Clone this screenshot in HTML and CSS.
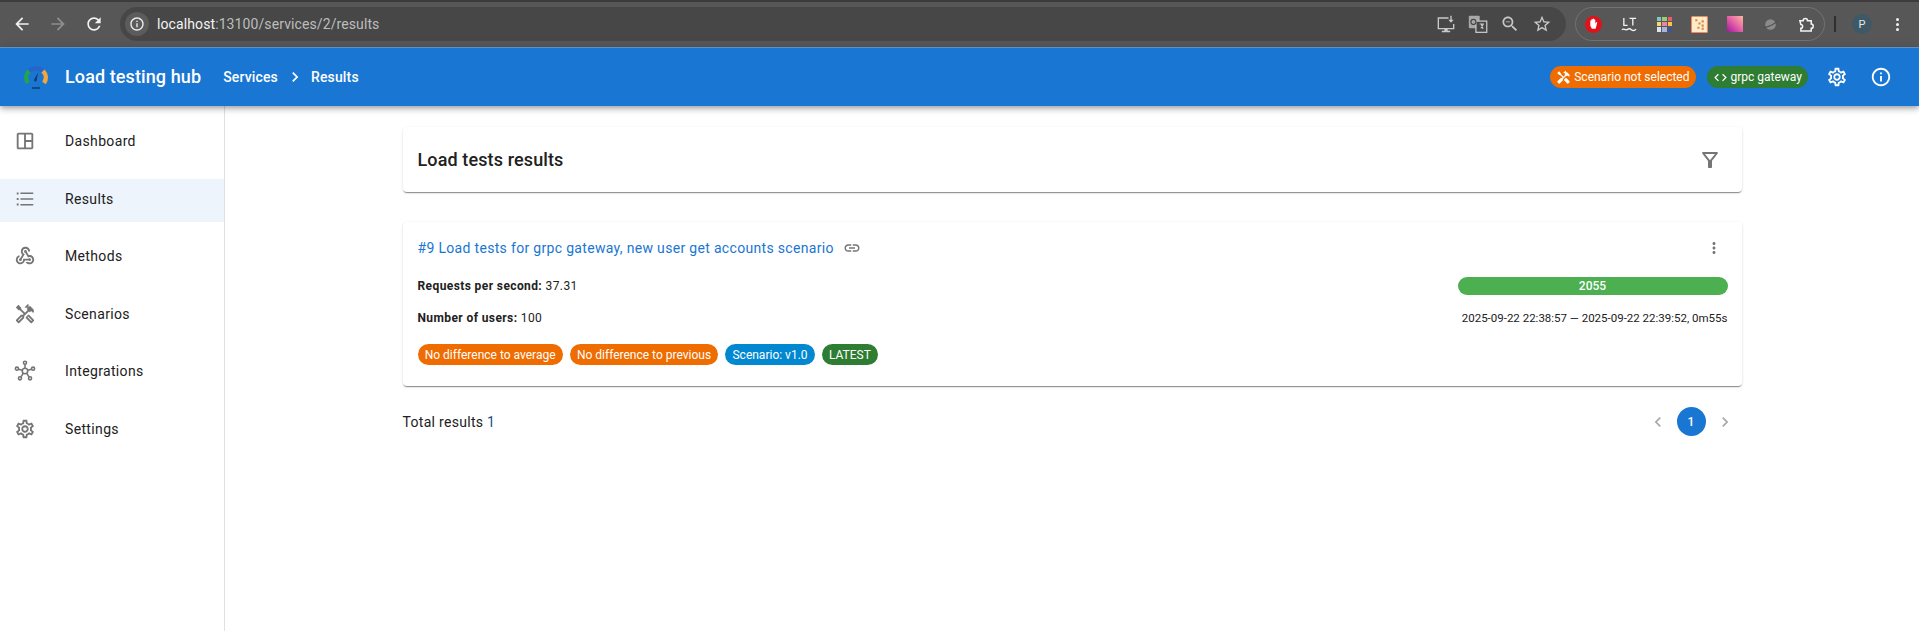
FILE: index.html
```html
<!DOCTYPE html>
<html lang="en">
<head>
<meta charset="utf-8">
<title>Load testing hub</title>
<link rel="stylesheet" href="styles.css">
</head>
<body>
<div class="browser">
  <div class="nav-btns">
    <svg class="c-icon" viewBox="0 0 24 24"><path d="M20 11H7.830l5.590-5.590L12 4l-8 8 8 8 1.410-1.410L7.830 13H20v-2z"/></svg>
    <svg class="c-icon dim" viewBox="0 0 24 24"><path d="M4 11h12.170l-5.590-5.590L12 4l8 8-8 8-1.410-1.410L16.170 13H4v-2z"/></svg>
    <svg class="c-icon" viewBox="0 0 24 24"><path d="M17.650 6.350C16.200 4.900 14.210 4 12 4c-4.420 0-7.990 3.580-7.990 8s3.570 8 7.990 8c3.730 0 6.840-2.550 7.730-6h-2.080c-.82 2.330-3.040 4-5.650 4-3.310 0-6-2.690-6-6s2.690-6 6-6c1.660 0 3.140.69 4.220 1.780L13 11h7V4l-2.350 2.350z"/></svg>
  </div>
  <div class="omnibox">
    <span class="site-info"><svg viewBox="0 0 24 24"><path d="M11 7h2v2h-2zm0 4h2v6h-2zm1-9C6.480 2 2 6.480 2 12s4.480 10 10 10 10-4.480 10-10S17.520 2 12 2zm0 18c-4.410 0-8-3.590-8-8s3.590-8 8-8 8 3.590 8 8-3.590 8-8 8z"/></svg></span>
    <span class="url">localhost<span class="url-dim">:13100/services/2/results</span></span>
    <span class="omni-actions">
      <svg class="o-icon" viewBox="0 0 24 24"><path d="M2 4h13v1.600H3.600v11.200h16.800V12H22v6.400h-8v1.800h3v1.600H7v-1.600h3v-1.800H2z"/><path d="M17.200 2h1.600v5h2.400l-3.200 3.600L14.800 7h2.400z"/></svg>
      <svg class="o-icon" viewBox="0 0 24 24"><rect class="tr-back" x="1" y="2" width="13" height="15" rx="1"/><rect class="tr-front" x="9.500" y="8.500" width="13" height="13.500"/><path class="tr-glyph" d="M14 12h5M16 12l2 6M18.500 12l-3 5"/><circle class="tr-g" cx="6.500" cy="9.500" r="3"/></svg>
      <svg class="o-icon" viewBox="0 0 24 24"><path d="M15.500 14h-.79l-.28-.27C15.410 12.590 16 11.110 16 9.500 16 5.910 13.090 3 9.500 3S3 5.910 3 9.500 5.910 16 9.500 16c1.610 0 3.090-.59 4.230-1.570l.27.28v.79l5 4.990L20.490 19l-4.990-5zm-6 0C7.010 14 5 11.990 5 9.500S7.010 5 9.500 5 14 7.010 14 9.500 11.990 14 9.500 14zM7 9h5v1H7z"/></svg>
      <svg class="o-icon" viewBox="0 0 24 24"><path d="M22 9.240l-7.190-.62L12 2 9.190 8.630 2 9.240l5.460 4.730L5.820 21 12 17.270 18.180 21l-1.630-7.030L22 9.240zM12 15.400l-3.760 2.270 1-4.280-3.320-2.880 4.380-.38L12 6.100l1.710 4.040 4.380.38-3.320 2.880 1 4.280L12 15.400z"/></svg>
    </span>
  </div>
  <div class="extensions">
    <span class="ext ext-stop"><svg viewBox="0 0 16 16"><circle class="stop-bg" cx="8" cy="8" r="8"/><path class="stop-hand" d="M5 7.500V4.500c0-.8 1-.8 1 0V3.500c0-.8 1.200-.8 1.200 0V3c0-.8 1.300-.8 1.300 0v.7c0-.7 1.200-.7 1.200 0V7l.8-1c.6-.6 1.300 0 .9.600L10 12H6.500L5 9.500z"/></svg></span>
    <span class="ext ext-lt"><svg viewBox="0 0 18 18"><path class="lt-stroke" d="M3 2v8h4M9 2.500h7M12.500 2.500V10M1 14.500c2-2 3 1 5 0s3-2 5 0 3 1 5-.5"/></svg></span>
    <span class="ext ext-grid">
      <i class="g1"></i><i class="g2"></i><i class="g3"></i>
      <i class="g4"></i><i class="g5"></i><i class="g6"></i>
      <i class="g7"></i><i class="g8"></i><i class="g9"></i>
    </span>
    <span class="ext ext-chart"><svg viewBox="0 0 16 16"><rect class="chart-bg" x=".5" y=".5" width="15" height="15" rx="1"/><path class="chart-mark" d="M4 3h2v2H4zM7 6h2v2H7zM10 4h2v2h-2zM10 8h2v2h-2zM6 10h2v2H6zM10 11h2v2h-2z"/></svg></span>
    <span class="ext ext-gradient"></span>
    <span class="ext ext-planet"><svg viewBox="0 0 16 16"><circle class="planet" cx="8" cy="8" r="5"/><path class="planet-ring" d="M2 11C6 10 12 7 14 5"/></svg></span>
    <span class="ext ext-puzzle"><svg viewBox="0 0 18 18"><path class="puzzle" d="M2 5h3.500C5.500 2 10 2 10 5h4v3.500c2.800 0 2.800 4.500 0 4.500v3H3v-3c2.500 0 2.500-4 0-4z"/></svg></span>
  </div>
  <span class="divider-v"></span>
  <span class="avatar">P</span>
  <span class="kebab"><i></i><i></i><i></i></span>
</div>

<header class="appbar">
  <div class="brand">
    <svg class="logo" viewBox="0 0 26 26">
      <path class="arc-blue" d="M6 7C9.500 3.500 16.500 3.500 20 7"/>
      <path class="arc-green" d="M6 7C2.500 10.500 2.500 15.500 5 19"/>
      <path class="arc-orange" d="M20 7C23.500 10.500 23.500 15.500 21 19"/>
      <path class="needle" d="M11 16l4-7.500-1.500 8.500a1.500 1.500 0 0 1-2.500-1z"/>
      <path class="base" d="M9 24h8"/>
    </svg>
    <span class="brand-name">Load testing hub</span>
  </div>
  <nav class="crumbs">
    <span>Services</span>
    <svg class="crumb-sep" viewBox="0 0 24 24"><path d="M10 6 8.590 7.410 13.170 12l-4.580 4.590L10 18l6-6z"/></svg>
    <span>Results</span>
  </nav>
  <div class="appbar-right">
    <span class="chip chip-orange chip-head">
      <svg viewBox="0 0 24 24"><path d="M21.670 18.170l-5.300-5.300h-.99l-2.540 2.540v.99l5.300 5.300c.39.39 1.020.39 1.410 0l2.120-2.120c.39-.38.39-1.020 0-1.410z"/><path d="M17.340 10.190l1.410-1.410 2.120 2.120c1.170-1.170 1.170-3.070 0-4.240l-3.540-3.540-1.410 1.410V1.710l-.7-.71-3.540 3.540.71.71h2.830l-1.410 1.410 1.060 1.060-2.890 2.890-4.130-4.130V5.060L4.830 2.040 2 4.870 5.030 7.900h1.410l4.130 4.130-.85.85H7.600l-5.300 5.300c-.39.39-.39 1.020 0 1.410l2.120 2.120c.39.39 1.020.39 1.410 0l5.300-5.300v-2.120l5.150-5.150 1.060 1.050z"/></svg>
      Scenario not selected
    </span>
    <span class="chip chip-green chip-head">
      <svg viewBox="0 0 24 24"><path d="M9.400 16.600L4.800 12l4.600-4.600L8 6l-6 6 6 6 1.400-1.400zm5.200 0l4.600-4.600-4.600-4.600L16 6l6 6-6 6-1.400-1.400z"/></svg>
      grpc gateway
    </span>
    <svg class="bar-icon" viewBox="0 0 24 24"><path d="M19.430 12.980c.04-.32.07-.64.07-.98 0-.34-.03-.66-.07-.98l2.110-1.650c.19-.15.24-.42.12-.64l-2-3.460c-.09-.16-.26-.25-.44-.25-.06 0-.12.01-.17.03l-2.490 1c-.52-.4-1.080-.73-1.690-.98l-.38-2.650C14.460 2.180 14.250 2 14 2h-4c-.25 0-.46.18-.49.42l-.38 2.650c-.61.25-1.170.59-1.690.98l-2.490-1c-.06-.02-.12-.03-.18-.03-.17 0-.34.09-.43.25l-2 3.460c-.13.22-.07.49.12.64l2.110 1.650c-.04.32-.07.65-.07.98 0 .33.03.66.07.98l-2.110 1.650c-.19.15-.24.42-.12.64l2 3.460c.09.16.26.25.44.25.06 0 .12-.01.17-.03l2.490-1c.52.4 1.080.73 1.690.98l.38 2.650c.03.24.24.42.49.42h4c.25 0 .46-.18.49-.42l.38-2.650c.61-.25 1.170-.59 1.690-.98l2.490 1c.06.02.12.03.18.03.17 0 .34-.09.43-.25l2-3.460c.12-.22.07-.49-.12-.64l-2.110-1.650zm-1.980-1.710c.04.31.05.52.05.73 0 .21-.02.43-.05.73l-.14 1.130.89.7 1.080.84-.7 1.210-1.270-.51-1.040-.42-.9.68c-.43.32-.84.56-1.250.73l-1.060.43-.16 1.130-.2 1.350h-1.400l-.19-1.350-.16-1.130-1.060-.43c-.43-.18-.83-.41-1.230-.71l-.91-.7-1.060.43-1.270.51-.7-1.210 1.080-.84.89-.7-.14-1.130c-.03-.31-.05-.54-.05-.74s.02-.43.05-.73l.14-1.130-.89-.7-1.080-.84.7-1.210 1.270.51 1.040.42.9-.68c.43-.32.84-.56 1.250-.73l1.060-.43.16-1.130.2-1.350h1.390l.19 1.350.16 1.130 1.060.43c.43.18.83.41 1.230.71l.91.7 1.060-.43 1.270-.51.7 1.210-1.070.85-.89.7.14 1.130zM12 8c-2.210 0-4 1.790-4 4s1.790 4 4 4 4-1.790 4-4-1.790-4-4-4zm0 6c-1.100 0-2-.9-2-2s.9-2 2-2 2 .9 2 2-.9 2-2 2z"/></svg>
    <svg class="bar-icon" viewBox="0 0 24 24"><path d="M11 7h2v2h-2zm0 4h2v6h-2zm1-9C6.480 2 2 6.480 2 12s4.480 10 10 10 10-4.480 10-10S17.520 2 12 2zm0 18c-4.410 0-8-3.590-8-8s3.590-8 8-8 8 3.590 8 8-3.590 8-8 8z"/></svg>
  </div>
</header>

<div class="layout">
  <aside class="sidebar">
    <a class="side-item">
      <svg class="side-icon" viewBox="0 0 24 24"><path d="M19 5v14H5V5h14m0-2H5c-1.100 0-2 .9-2 2v14c0 1.100.9 2 2 2h14c1.100 0 2-.9 2-2V5c0-1.100-.9-2-2-2z"/><path d="M11 4h2v16h-2zM12 11h8v2h-8z"/></svg>
      <span>Dashboard</span>
    </a>
    <a class="side-item selected">
      <svg class="side-icon" viewBox="0 0 24 24"><path d="M3 5h2v2H3zM3 11h2v2H3zM3 17h2v2H3zM7 5h14v1.600H7zM7 11.200h14v1.600H7zM7 17.400h14V19H7z"/></svg>
      <span>Results</span>
    </a>
    <a class="side-item">
      <svg class="side-icon" viewBox="0 0 24 24"><path d="M10 15h5.880c.27-.31.67-.5 1.120-.5.83 0 1.500.67 1.500 1.500s-.67 1.500-1.500 1.500c-.44 0-.84-.19-1.120-.5H11.900c-.46 2.280-2.480 4-4.900 4-2.760 0-5-2.240-5-5 0-2.420 1.720-4.440 4-4.900v2.070c-1.160.41-2 1.530-2 2.830 0 1.650 1.350 3 3 3s3-1.350 3-3v-1zm2.500-11c1.650 0 3 1.350 3 3h2c0-2.760-2.240-5-5-5s-5 2.240-5 5c0 1.430.6 2.710 1.550 3.620l-2.350 3.900c-.68.15-1.200.75-1.200 1.480 0 .83.67 1.500 1.500 1.500s1.500-.67 1.500-1.500c0-.16-.02-.31-.07-.45l3.380-5.630C10.490 9.610 9.500 8.420 9.500 7c0-1.650 1.350-3 3-3zm4.500 9c-.64 0-1.230.2-1.720.54l-3.050-5.070C11.530 8.350 11 7.740 11 7c0-.83.67-1.500 1.500-1.500S14 6.170 14 7c0 .15-.02.29-.06.43l2.190 3.650c.28-.05.57-.08.87-.08 2.760 0 5 2.240 5 5s-2.240 5-5 5c-1.850 0-3.470-1.010-4.330-2.500h2.670c.48.32 1.050.5 1.660.5 1.650 0 3-1.350 3-3s-1.350-3-3-3z"/></svg>
      <span>Methods</span>
    </a>
    <a class="side-item">
      <svg class="side-icon" viewBox="0 0 24 24"><path d="M21.670 18.170l-5.300-5.300h-.99l-2.540 2.540v.99l5.300 5.300c.39.39 1.020.39 1.410 0l2.120-2.120c.39-.38.39-1.020 0-1.410zm-2.830 1.420l-4.240-4.240.71-.71 4.240 4.240-.71.71z"/><path d="M17.340 10.190l1.410-1.410 2.120 2.120c1.170-1.170 1.170-3.070 0-4.240l-3.540-3.540-1.410 1.410V1.710l-.7-.71-3.540 3.540.71.71h2.830l-1.410 1.410 1.060 1.060-2.890 2.890-4.130-4.130V5.060L4.830 2.040 2 4.870 5.030 7.900h1.410l4.130 4.130-.85.85H7.600l-5.300 5.300c-.39.39-.39 1.020 0 1.410l2.120 2.120c.39.39 1.020.39 1.410 0l5.300-5.300v-2.120l5.150-5.150 1.060 1.050zm-7.980 5.150l-4.240 4.240-.71-.71 4.240-4.240.71.71z"/></svg>
      <span>Scenarios</span>
    </a>
    <a class="side-item">
      <svg class="side-icon" viewBox="0 0 24 24"><g class="hub"><circle cx="12" cy="12" r="3"/><circle cx="12" cy="3" r="1.700"/><circle cx="3.200" cy="9.500" r="1.700"/><circle cx="20.800" cy="9.500" r="1.700"/><circle cx="6.500" cy="20" r="1.700"/><circle cx="17.500" cy="20" r="1.700"/><path d="M12 4.700V9M4.800 10l4.400 1.200M19.200 10l-4.400 1.200M7.500 18.600l2.700-4.200M16.500 18.600l-2.700-4.200"/></g></svg>
      <span>Integrations</span>
    </a>
    <a class="side-item">
      <svg class="side-icon" viewBox="0 0 24 24"><path d="M19.430 12.980c.04-.32.07-.64.07-.98 0-.34-.03-.66-.07-.98l2.110-1.650c.19-.15.24-.42.12-.64l-2-3.460c-.09-.16-.26-.25-.44-.25-.06 0-.12.01-.17.03l-2.490 1c-.52-.4-1.080-.73-1.690-.98l-.38-2.650C14.460 2.180 14.250 2 14 2h-4c-.25 0-.46.18-.49.42l-.38 2.650c-.61.25-1.170.59-1.690.98l-2.490-1c-.06-.02-.12-.03-.18-.03-.17 0-.34.09-.43.25l-2 3.460c-.13.22-.07.49.12.64l2.110 1.650c-.04.32-.07.65-.07.98 0 .33.03.66.07.98l-2.110 1.650c-.19.15-.24.42-.12.64l2 3.460c.09.16.26.25.44.25.06 0 .12-.01.17-.03l2.490-1c.52.4 1.080.73 1.690.98l.38 2.650c.03.24.24.42.49.42h4c.25 0 .46-.18.49-.42l.38-2.650c.61-.25 1.170-.59 1.690-.98l2.490 1c.06.02.12.03.18.03.17 0 .34-.09.43-.25l2-3.460c.12-.22.07-.49-.12-.64l-2.110-1.650zm-1.980-1.710c.04.31.05.52.05.73 0 .21-.02.43-.05.73l-.14 1.130.89.7 1.080.84-.7 1.210-1.270-.51-1.040-.42-.9.68c-.43.32-.84.56-1.250.73l-1.060.43-.16 1.130-.2 1.350h-1.400l-.19-1.350-.16-1.130-1.060-.43c-.43-.18-.83-.41-1.230-.71l-.91-.7-1.060.43-1.270.51-.7-1.210 1.080-.84.89-.7-.14-1.130c-.03-.31-.05-.54-.05-.74s.02-.43.05-.73l.14-1.130-.89-.7-1.080-.84.7-1.210 1.270.51 1.040.42.9-.68c.43-.32.84-.56 1.250-.73l1.060-.43.16-1.130.2-1.350h1.390l.19 1.350.16 1.130 1.060.43c.43.18.83.41 1.230.71l.91.7 1.060-.43 1.270-.51.7 1.210-1.070.85-.89.7.14 1.130zM12 8c-2.210 0-4 1.790-4 4s1.790 4 4 4 4-1.790 4-4-1.790-4-4-4zm0 6c-1.100 0-2-.9-2-2s.9-2 2-2 2 .9 2 2-.9 2-2 2z"/></svg>
      <span>Settings</span>
    </a>
  </aside>

  <main class="main">
    <div class="container">
      <section class="card header-card">
        <h1 class="card-title">Load tests results</h1>
        <svg class="filter" viewBox="0 0 24 24"><path d="M7 6h10l-5.010 6.300L7 6zm-2.750-.39C6.270 8.200 10 13 10 13v6c0 .55.45 1 1 1h2c.55 0 1-.45 1-1v-6s3.720-4.800 5.740-7.390c.51-.66.04-1.610-.79-1.610H5.040c-.83 0-1.300.95-.79 1.610z"/></svg>
      </section>

      <section class="card result-card">
        <div class="result-head">
          <a class="result-link">#9 Load tests for grpc gateway, new user get accounts scenario</a>
          <svg class="link-icon" viewBox="0 0 24 24"><path d="M3.900 12c0-1.710 1.390-3.100 3.100-3.100h4V7H7c-2.760 0-5 2.240-5 5s2.240 5 5 5h4v-1.900H7c-1.710 0-3.100-1.390-3.100-3.100zM8 13h8v-2H8v2zm9-6h-4v1.900h4c1.710 0 3.100 1.390 3.100 3.100s-1.390 3.100-3.100 3.100h-4V17h4c2.760 0 5-2.240 5-5s-2.240-5-5-5z"/></svg>
          <svg class="more-icon" viewBox="0 0 24 24"><path d="M12 8c1.100 0 2-.9 2-2s-.9-2-2-2-2 .9-2 2 .9 2 2 2zm0 2c-1.100 0-2 .9-2 2s.9 2 2 2 2-.9 2-2-.9-2-2-2zm0 6c-1.100 0-2 .9-2 2s.9 2 2 2 2-.9 2-2-.9-2-2-2z"/></svg>
        </div>
        <div class="result-row">
          <p class="stat"><b>Requests per second:</b> 37.31</p>
          <div class="progress">2055</div>
        </div>
        <div class="result-row">
          <p class="stat"><b>Number of users:</b> 100</p>
          <p class="dates">2025-09-22 22:38:57 — 2025-09-22 22:39:52, 0m55s</p>
        </div>
        <div class="chips">
          <span class="chip chip-orange">No difference to average</span>
          <span class="chip chip-orange">No difference to previous</span>
          <span class="chip chip-blue">Scenario: v1.0</span>
          <span class="chip chip-green">LATEST</span>
        </div>
      </section>

      <div class="footer-row">
        <p class="total">Total results <span class="total-num">1</span></p>
        <div class="pager">
          <svg class="pager-arrow" viewBox="0 0 24 24"><path d="M15.410 7.410 14 6l-6 6 6 6 1.410-1.410L10.830 12z"/></svg>
          <span class="page-current">1</span>
          <svg class="pager-arrow" viewBox="0 0 24 24"><path d="M10 6 8.590 7.410 13.170 12l-4.580 4.590L10 18l6-6z"/></svg>
        </div>
      </div>
    </div>
  </main>
</div>
</body>
</html>
```

FILE: styles.css
```css
* { box-sizing: border-box; }
html, body { margin: 0; padding: 0; height: 100%; overflow: hidden; }
body {
  font-family: Roboto, "Liberation Sans", sans-serif;
  background: #fff;
  color: #212121;
  display: flex;
  flex-direction: column;
}
p, h1 { margin: 0; }

/* browser chrome */
.browser {
  height: 47px;
  flex: none;
  display: flex;
  align-items: center;
  background: #575757;
  border-top: 2px solid #3c3c3c;
  padding: 0 9px 1px 12px;
}
.nav-btns { display: flex; gap: 16px; align-items: center; width: 108px; flex: none; }
.c-icon { width: 20px; height: 20px; fill: #f2f2f2; flex: none; }
.c-icon.dim { fill: #8f8f8f; }
.omnibox {
  width: 1446px;
  flex: none;
  height: 34px;
  background: #474747;
  border-radius: 17px;
  display: flex;
  align-items: center;
  padding: 0 14px 0 5px;
}
.site-info {
  width: 24px;
  height: 24px;
  border-radius: 50%;
  background: #5c5c5c;
  display: flex;
  align-items: center;
  justify-content: center;
  flex: none;
}
.site-info svg { width: 16px; height: 16px; fill: #f0f0f0; }
.url {
  margin-left: 8px;
  font-size: 14px;
  color: #f4f4f4;
  letter-spacing: 0.1px;
}
.url-dim { color: #bdbdbd; }
.omni-actions { margin-left: auto; display: flex; gap: 12px; align-items: center; }
.o-icon { width: 20px; height: 20px; fill: #c9c9c9; flex: none; }
.tr-back { fill: #a8a8a8; }
.tr-front { fill: #474747; stroke: #c9c9c9; stroke-width: 1.500; }
.tr-glyph { fill: none; stroke: #c9c9c9; stroke-width: 1.300; }
.tr-g { fill: none; stroke: #474747; stroke-width: 1.500; }
.extensions {
  margin-left: 9px;
  width: 250px;
  flex: none;
  height: 34px;
  border: 1px solid #727272;
  border-radius: 17px;
  display: flex;
  align-items: center;
  justify-content: space-between;
  padding: 0 9px;
}
.ext { width: 17px; height: 17px; flex: none; display: block; }
.ext svg { width: 100%; height: 100%; display: block; }
.stop-bg { fill: #e3101a; }
.stop-hand { fill: #fff; }
.lt-stroke { fill: none; stroke: #f2f2f2; stroke-width: 1.400; }
.ext-grid { display: grid; grid-template-columns: repeat(3, 1fr); gap: 1px; width: 15px; height: 15px; }
.g1 { background: #7fc6c0; } .g2 { background: #9bcf6e; } .g3 { background: #ef5a6a; }
.g4 { background: #f4d772; } .g5 { background: #ee82a6; } .g6 { background: #f7c646; }
.g7 { background: #dfe3ee; } .g8 { background: #a9b4dc; } .g9 { background: #43548a; }
.chart-bg { fill: #fdeccb; stroke: #f08a5c; }
.chart-mark { fill: #d9873f; }
.ext-gradient { width: 16px; height: 16px; background: linear-gradient(45deg, #a0189a 0%, #e460a8 50%, #f8b8a0 100%); }
.planet { fill: #8a8a8a; }
.planet-ring { fill: none; stroke: #4a4a4a; stroke-width: 1; }
.puzzle { fill: none; stroke: #f4f4f4; stroke-width: 1.600; }
.divider-v { width: 2px; height: 16px; background: #2f2f2f; margin-left: 9px; flex: none; }
.avatar {
  margin-left: 16px;
  width: 20px;
  height: 20px;
  border-radius: 50%;
  background: #3f5866;
  color: #dfe7ec;
  font-size: 11px;
  display: flex;
  align-items: center;
  justify-content: center;
  flex: none;
}
.kebab { margin-left: 24px; display: flex; flex-direction: column; gap: 2px; flex: none; }
.kebab i { width: 3px; height: 3px; border-radius: 50%; background: #f2f2f2; display: block; }

/* app bar */
.appbar {
  height: 59px;
  flex: none;
  background: #1976d2;
  border-top: 1px solid #5c94c9;
  color: #fff;
  display: flex;
  align-items: center;
  padding: 0 27px 0 23px;
  box-shadow: 0 2px 4px -1px rgba(0,0,0,.2), 0 4px 5px 0 rgba(0,0,0,.14), 0 1px 10px 0 rgba(0,0,0,.12);
  position: relative;
  z-index: 2;
}
.brand { display: flex; align-items: center; gap: 16px; }
.logo { width: 26px; height: 26px; flex: none; fill: none; }
.arc-blue { stroke: #2566c8; stroke-width: 4.500; }
.arc-green { stroke: #22a352; stroke-width: 4.500; }
.arc-orange { stroke: #f4a63c; stroke-width: 4.500; }
.needle { fill: #143a66; }
.base { stroke: #143a66; stroke-width: 1.500; }
.brand-name { font-size: 18px; font-weight: 500; line-height: 1; letter-spacing: 0.1px; }
.crumbs { margin-left: 22px; display: flex; align-items: center; font-size: 14px; font-weight: 500; letter-spacing: 0.15px; }
.crumb-sep { width: 20px; height: 20px; fill: #fff; margin: 0 6px 0 7px; }
.appbar-right { margin-left: auto; display: flex; align-items: center; }
.bar-icon { width: 22px; height: 22px; fill: #fff; margin-left: 22px; flex: none; }
.appbar-right .bar-icon:first-of-type { margin-left: 18px; }

.chip {
  display: inline-flex;
  align-items: center;
  height: 21px;
  border-radius: 11px;
  padding: 0 7.200px;
  color: #fff;
  font-size: 12px;
  line-height: 1;
  white-space: nowrap;
}
.chip-head { height: 22px; padding: 0 6px; }
.chip-head + .chip-head { margin-left: 11px; }
.chip-head svg { width: 15px; height: 15px; fill: #fff; margin-right: 3px; flex: none; }
.chip-orange { background: #ef6c00; }
.chip-green { background: #2e7d32; }
.chip-blue { background: #0288d1; }

/* layout */
.layout { flex: 1; display: flex; min-height: 0; }
.sidebar {
  width: 225px;
  flex: none;
  border-right: 1px solid #e0e0e0;
  padding-top: 15px;
  display: flex;
  flex-direction: column;
  gap: 14.600px;
}
.side-item {
  height: 43px;
  display: flex;
  align-items: center;
  padding: 0 0 3px 14px;
  font-size: 14px;
  letter-spacing: 0.35px;
  color: #212121;
}
.side-item.selected { background: #edf4fb; }
.side-item span { margin-left: 29px; }
.side-icon { width: 22px; height: 22px; fill: #757575; flex: none; }
.hub circle, .hub path { fill: none; stroke: #757575; stroke-width: 1.700; }

/* main */
.main { flex: 1; min-width: 0; display: flex; justify-content: center; padding-top: 21px; }
.container { width: 1339px; flex: none; }
.card {
  background: #fff;
  border-radius: 4px;
  box-shadow: 0 2px 1px -1px rgba(0,0,0,.3), 0 1px 1px 0 rgba(0,0,0,.14), 0 1px 3px 0 rgba(0,0,0,.12);
}
.header-card {
  height: 65px;
  display: flex;
  align-items: center;
  justify-content: space-between;
  padding: 0 15px;
}
.card-title { font-size: 18px; font-weight: 500; color: #212121; letter-spacing: 0.12px; }
.filter { width: 24px; height: 24px; fill: #757575; margin-right: 5px; margin-top: 1px; }
.result-card { margin-top: 30px; height: 164px; padding: 14px 14px 0 15px; }
.result-head { display: flex; align-items: center; height: 24px; margin-bottom: 17px; }
.result-link { font-size: 14px; color: #1976d2; letter-spacing: 0.32px; }
.link-icon { width: 18px; height: 18px; fill: #757575; margin-left: 9px; flex: none; }
.more-icon { width: 18px; height: 18px; fill: #757575; margin-left: auto; margin-right: 5px; flex: none; }
.result-row {
  display: flex;
  align-items: center;
  justify-content: space-between;
  height: 18px;
  margin-bottom: 14px;
}
.stat { font-size: 12px; color: #212121; letter-spacing: 0.4px; }
.stat b { font-weight: 700; }
.progress {
  width: 270px;
  height: 18px;
  border-radius: 9px;
  background: #4caf50;
  color: #fff;
  font-size: 12px;
  font-weight: 500;
  line-height: 18px;
  text-align: center;
}
.dates { font-size: 11.500px; color: #212121; }
.chips { display: flex; gap: 7px; margin-top: 17px; }

.footer-row {
  margin-top: 21px;
  display: flex;
  align-items: center;
  justify-content: space-between;
  height: 29px;
}
.total { font-size: 14px; letter-spacing: 0.3px; color: #212121; }
.total-num { color: #174f85; }
.pager { display: flex; align-items: center; gap: 9px; margin-right: 7px; }
.pager-arrow { width: 20px; height: 20px; fill: #a8a8a8; flex: none; }
.page-current {
  width: 29px;
  height: 29px;
  border-radius: 50%;
  background: #1976d2;
  color: #fff;
  font-size: 12px;
  font-weight: 500;
  display: flex;
  align-items: center;
  justify-content: center;
}
```
